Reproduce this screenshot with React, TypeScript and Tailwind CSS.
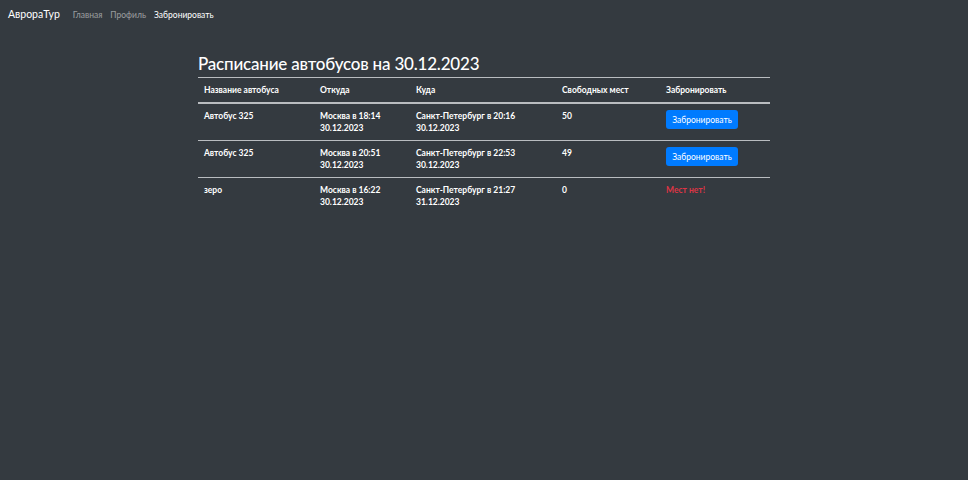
import React from "react";

const rows = [
  { name: "Автобус 325", from: ["Москва в 18:14", "30.12.2023"], to: ["Санкт-Петербург в 20:16", "30.12.2023"], seats: "50", ok: true },
  { name: "Автобус 325", from: ["Москва в 20:51", "30.12.2023"], to: ["Санкт-Петербург в 22:53", "30.12.2023"], seats: "49", ok: true },
  { name: "зеро", from: ["Москва в 16:22", "30.12.2023"], to: ["Санкт-Петербург в 21:27", "31.12.2023"], seats: "0", ok: false },
];

export default function App() {
  return (
    <div className="min-h-[480px] w-full bg-[#343a40] text-white" style={{ fontFamily: 'Lato, "Noto Sans", sans-serif' }}>
      <nav className="flex h-[30px] items-center px-[8px]">
        <span className="text-[10.5px] text-white mr-[13px]">АврораТур</span>
        <div className="flex gap-[8px] text-[8.5px]">
          <span className="text-white/50">Главная</span>
          <span className="text-white/50">Профиль</span>
          <span className="text-white">Забронировать</span>
        </div>
      </nav>
      <div className="mx-auto w-[572px] pt-[22px]">
        <h1 className="text-[17px] leading-[24px] font-medium tracking-[-0.2px] text-white mb-[1px]">Расписание автобусов на 30.12.2023</h1>
        <table className="w-full border-collapse text-[8.5px] font-bold leading-[12px] text-white" style={{ tableLayout: "fixed" }}>
          <colgroup>
            <col className="w-[116px]" />
            <col className="w-[96px]" />
            <col className="w-[146px]" />
            <col className="w-[104px]" />
            <col className="w-[110px]" />
          </colgroup>
          <thead>
            <tr className="border-t border-[#b9bcc0] border-b-2">
              <th className="text-left px-[6px] py-[6px] align-bottom">Название автобуса</th>
              <th className="text-left px-[6px] py-[6px] align-bottom">Откуда</th>
              <th className="text-left px-[6px] py-[6px] align-bottom">Куда</th>
              <th className="text-left px-[6px] py-[6px] align-bottom">Свободных мест</th>
              <th className="text-left px-[6px] py-[6px] align-bottom">Забронировать</th>
            </tr>
          </thead>
          <tbody>
            {rows.map((r, i) => (
              <tr key={i} className={i < rows.length - 1 ? "border-b border-[#b9bcc0]" : ""}>
                <td className="px-[6px] py-[6px] align-top">{r.name}</td>
                <td className="px-[6px] py-[6px] align-top">{r.from[0]}<br />{r.from[1]}</td>
                <td className="px-[6px] py-[6px] align-top">{r.to[0]}<br />{r.to[1]}</td>
                <td className="px-[6px] py-[6px] align-top">{r.seats}</td>
                <td className="px-[6px] py-[6px] align-top">
                  {r.ok ? (
                    <button className="h-[19px] w-[72px] rounded-[3px] bg-[#007bff] text-[8.5px] font-normal text-white">Забронировать</button>
                  ) : (
                    <span className="text-[#dc3545]">Мест нет!</span>
                  )}
                </td>
              </tr>
            ))}
          </tbody>
        </table>
      </div>
    </div>
  );
}
